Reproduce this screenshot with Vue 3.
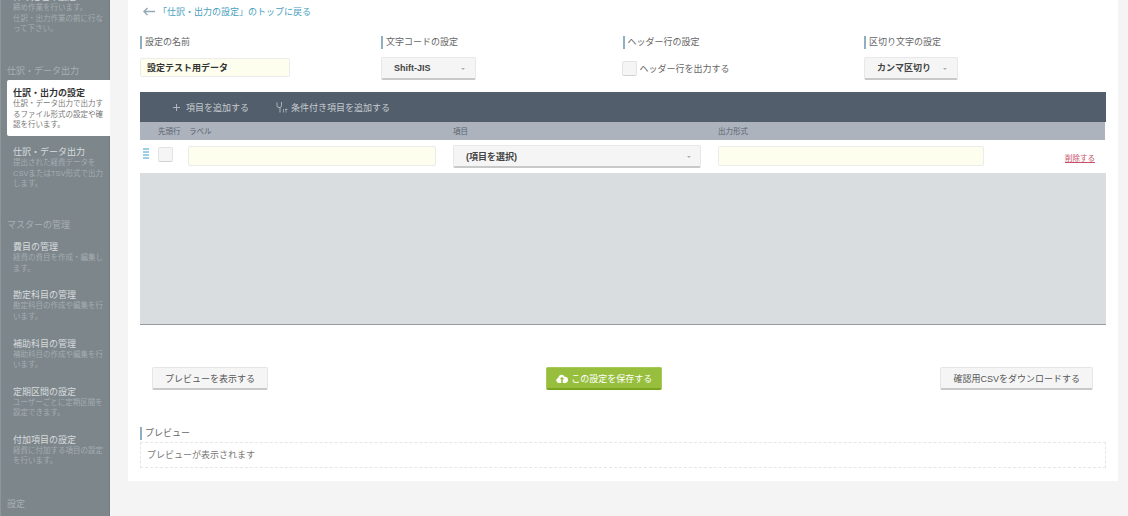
<script setup>
const topItems = [
  { title: '仕訳・出力の設定', desc: '仕訳・データ出力で出力するファイル形式の設定や確認を行います。', active: true },
  { title: '仕訳・データ出力', desc: '提出された経費データをCSVまたはTSV形式で出力します。' },
]
const masterItems = [
  { title: '費目の管理', desc: '経費の費目を作成・編集します。' },
  { title: '勘定科目の管理', desc: '勘定科目の作成や編集を行います。' },
  { title: '補助科目の管理', desc: '補助科目の作成や編集を行います。' },
  { title: '定期区間の設定', desc: 'ユーザーごとに定期区間を設定できます。' },
  { title: '付加項目の設定', desc: '経費に付加する項目の設定を行います。' },
]
const settings = [
  { label: '設定の名前' },
  { label: '文字コードの設定' },
  { label: 'ヘッダー行の設定' },
  { label: '区切り文字の設定' },
]
</script>

<template>
  <div class="page">
    <!-- サイドメニュー -->
    <aside class="sidebar">
      <div class="side-scroll">
        <div class="side-item first">
          <div class="side-title">締め処理の設定</div>
          <div class="side-desc">締め作業を行います。<br />仕訳・出力作業の前に行なって下さい。</div>
        </div>

        <div class="side-head">仕訳・データ出力</div>
        <div v-for="item in topItems" :key="item.title" class="side-item" :class="{ active: item.active }">
          <div class="side-title">{{ item.title }}</div>
          <div class="side-desc">{{ item.desc }}</div>
        </div>

        <div class="side-head master">マスターの管理</div>
        <div v-for="item in masterItems" :key="item.title" class="side-item">
          <div class="side-title">{{ item.title }}</div>
          <div class="side-desc">{{ item.desc }}</div>
        </div>

        <div class="side-head last">設定</div>
      </div>
    </aside>

    <main class="panel">
      <a class="back">
        <svg class="back-icon" width="12" height="9" viewBox="0 0 12 9">
          <path d="M4.500 1 1 4.500 4.500 8M1 4.500h11" fill="none" stroke="#93a9b6" stroke-width="1.400" />
        </svg>
        「仕訳・出力の設定」のトップに戻る
      </a>

      <!-- 基本設定 -->
      <div class="settings">
        <div v-for="s in settings" :key="s.label" class="label">{{ s.label }}</div>

        <input class="text-input name-input" value="設定テスト用データ" />
        <div class="select charset">Shift-JIS<span class="caret"></span></div>
        <label class="check-line"><span class="checkbox"></span>ヘッダー行を出力する</label>
        <div class="select separator">カンマ区切り<span class="caret"></span></div>
      </div>

      <!-- 項目テーブル -->
      <section class="editor">
        <div class="toolbar">
          <span class="tool add">
            <svg width="7" height="7" viewBox="0 0 7 7"><path d="M3.500 0v7M0 3.500h7" stroke="#aeb5bc" stroke-width="1" /></svg>
            項目を追加する
          </span>
          <span class="tool cond">
            <svg width="12" height="11" viewBox="0 0 12 11" fill="none" stroke="#aeb5bc" stroke-width="1">
              <path d="M1 .5v3q0 2 2 2h1v5M4 5.500q1.500 0 1.500-2V0" />
              <path d="M7.500 7v3.500M9 7.500h2.500M10 6.500v4" stroke-width=".8" />
            </svg>
            条件付き項目を追加する
          </span>
        </div>

        <div class="row head-row">
          <span></span>
          <span>先頭行</span>
          <span class="col-label">ラベル</span>
          <span>項目</span>
          <span>出力形式</span>
          <span></span>
        </div>

        <div class="row item-row">
          <span class="handle"><i></i><i></i><i></i><i></i></span>
          <span class="checkbox small"></span>
          <input class="text-input wide" />
          <div class="select item-select">(項目を選択)<span class="caret"></span></div>
          <input class="text-input wide format" />
          <a class="remove">削除する</a>
        </div>

        <div class="empty-area"></div>
      </section>

      <div class="actions">
        <button class="btn" type="button">プレビューを表示する</button>
        <button class="btn save" type="button">
          <svg width="12" height="9" viewBox="0 0 13 10">
            <path fill="#fff" fill-rule="evenodd" d="M3 10a3 3 0 0 1-.6-5.900A3.600 3.600 0 0 1 9.300 3 3.500 3.500 0 0 1 10 10H3ZM6.500 3 4 5.800h1.600V10h1.800V5.800H9L6.500 3Z" />
          </svg>
          この設定を保存する
        </button>
        <button class="btn" type="button">確認用CSVをダウンロードする</button>
      </div>

      <div class="label preview-label">プレビュー</div>
      <div class="preview">プレビューが表示されます</div>
    </main>
  </div>
</template>

<style>
body {
  background: #f4f4f4;
}
</style>

<style scoped>
.page {
  display: flex;
  width: 1128px;
  height: 516px;
  overflow: hidden;
  background: #f4f4f4;
  color: #444;
  font-family: "Liberation Sans", "Noto Sans CJK JP", sans-serif;
  font-size: 9px;
}

/* サイドメニュー */
.sidebar {
  flex: 0 0 110px;
  height: 516px;
  overflow: hidden;
  background: #7c868b;
  border-left: 1px solid #8d969b;
  box-sizing: border-box;
  box-shadow: inset -1px 0 0 #727c81;
}

.side-scroll {
  margin-top: -10px;
  padding-left: 6px;
}

.side-item {
  height: 48.200px;
  padding: 1px 6px 0;
  box-sizing: border-box;
}

.side-item.first {
  height: 69px;
}

.side-item.active {
  height: 56px;
  margin-bottom: 9px;
  padding-top: 7px;
  background: #fff;
  border-radius: 2px 0 0 2px;
}

.side-title {
  color: #d8dcde;
  font-size: 9px;
  line-height: 12px;
}

.side-item.active .side-title {
  color: #333;
  font-weight: 700;
}

.side-desc {
  color: #a5adb1;
  font-size: 7.500px;
  line-height: 10.500px;
  width: 91px;
}

.side-item.active .side-desc {
  color: #777;
}

.side-head {
  height: 21px;
  padding-top: 6px;
  box-sizing: border-box;
  color: #a9b0b4;
  font-size: 9px;
  line-height: 13px;
}

.side-head.master {
  height: 28px;
  margin-top: 19px;
  padding-top: 7px;
}

.side-head.last {
  margin-top: 11px;
}

/* メインパネル */
.panel {
  flex: 0 0 990px;
  height: 481px;
  margin-left: 18px;
  padding: 0 12px;
  box-sizing: border-box;
  background: #fff;
}

.back {
  display: flex;
  align-items: center;
  gap: 3px;
  height: 23px;
  padding-left: 3px;
  color: #4a9fc0;
  font-size: 9px;
}

.settings {
  display: grid;
  grid-template-columns: 241px 241.500px 241.500px 1fr;
  grid-template-rows: 21px 35px;
  margin-top: 13px;
  align-items: start;
}

.label {
  height: 13px;
  padding-left: 3px;
  border-left: 2px solid #8fb0c0;
  color: #666;
  font-size: 9px;
  line-height: 13px;
}

.text-input {
  display: block;
  box-sizing: border-box;
  padding: 0 6px;
  background: #fdfeee;
  border: 1px solid #ececec;
  border-radius: 2px;
  outline: none;
  color: #333;
  font-family: inherit;
  font-size: 9px;
}

.name-input {
  width: 150px;
  height: 19px;
  margin-top: 1px;
  font-weight: 700;
}

.select {
  position: relative;
  box-sizing: border-box;
  height: 23px;
  padding-left: 12px;
  background: #f5f5f5;
  border: 1px solid #e8e8e8;
  border-bottom: 2px solid #c9c9c9;
  border-radius: 2px;
  color: #444;
  font-size: 9px;
  font-weight: 700;
  line-height: 20px;
}

.charset {
  width: 95px;
}

.separator {
  width: 94px;
}

/* 下向きの小さな三角 */
.caret {
  position: absolute;
  top: 10px;
  right: 10px;
  border-top: 2px solid #a8b0b6;
  border-left: 2px solid transparent;
  border-right: 2px solid transparent;
}

.check-line {
  display: flex;
  align-items: center;
  gap: 3px;
  height: 15px;
  margin: 4px 0 0 -1px;
  color: #666;
}

.checkbox {
  display: block;
  box-sizing: border-box;
  width: 15px;
  height: 15px;
  background: #f5f5f5;
  border: 1px solid #e4e4e4;
  border-bottom-color: #d2d2d2;
  border-radius: 2px;
}

.checkbox.small {
  margin-top: 2px;
}

/* 項目テーブル */
.toolbar {
  display: flex;
  align-items: center;
  height: 30px;
  background: #525e6b;
  color: #c6cbd0;
  font-size: 9px;
}

.tool {
  display: flex;
  align-items: center;
}

.tool.add {
  gap: 6px;
  margin-left: 33px;
}

.tool.cond {
  gap: 3px;
  margin-left: 27px;
}

.row {
  display: grid;
  grid-template-columns: 18px 30px 265px 265px 347px 1fr;
  width: 965px;
}

.head-row {
  height: 18px;
  background: #acb3bd;
  color: #5a646e;
  font-size: 7.500px;
  line-height: 20px;
}

.col-label {
  padding-left: 1px;
}

.item-row {
  height: 33px;
  background: #fff;
  padding-top: 5px;
  box-sizing: border-box;
}

.handle {
  display: flex;
  flex-direction: column;
  gap: 1.500px;
  margin-top: 3px;
  padding-left: 3px;
}

.handle i {
  display: block;
  width: 6px;
  height: 1.500px;
  background: #9ccfe6;
}

.wide {
  width: 248px;
  height: 20px;
  margin-top: 1px;
}

.format {
  width: 266px;
}

.item-select {
  width: 248px;
  line-height: 22px;
}

.item-select .caret {
  right: 9px;
}

.remove {
  margin-top: 7px;
  color: #c8506a;
  font-size: 7.500px;
  line-height: 13px;
  text-decoration: underline;
}

.empty-area {
  height: 152px;
  background: #d9dde0;
  border-bottom: 1px solid #979b9f;
  box-sizing: border-box;
}

.actions {
  display: flex;
  justify-content: space-between;
  margin-top: 42px;
  padding: 0 13px 0 12px;
}

.btn {
  height: 23px;
  padding: 0 12px;
  background: #f5f5f5;
  border: 1px solid #e6e6e6;
  border-bottom: 2px solid #c9c9c9;
  border-radius: 2px;
  color: #555;
  font-family: inherit;
  font-size: 9px;
}

.save {
  display: flex;
  align-items: center;
  gap: 3px;
  padding: 0 9px;
  background: #97bf3d;
  border-color: #a6ca55;
  border-bottom-color: #7aa51f;
  color: #fff;
}

.preview-label {
  margin-top: 37px;
}

.preview {
  height: 26px;
  margin-top: 2px;
  padding-left: 6px;
  border: 1px dashed #e6e6e6;
  box-sizing: border-box;
  color: #777;
  font-size: 9px;
  line-height: 24px;
  width: 966px;
}
</style>
